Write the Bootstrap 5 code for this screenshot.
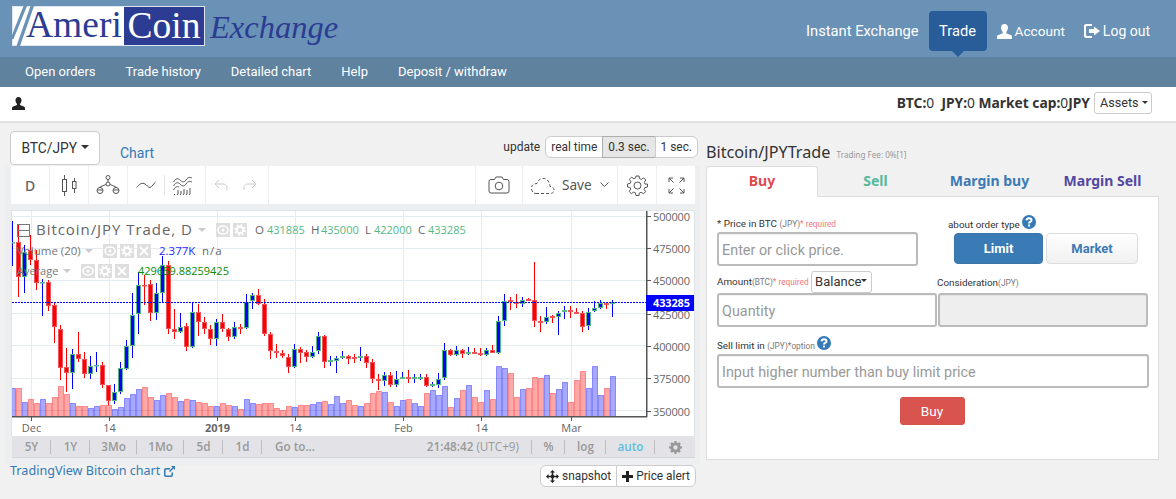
<!DOCTYPE html>
<html lang="en">
<head>
<meta charset="utf-8">
<title>AmeriCoin Exchange</title>
<link href="https://cdn.jsdelivr.net/npm/bootstrap@5.3.0/dist/css/bootstrap.min.css" rel="stylesheet">
<style>
html,body{height:499px;overflow:hidden}
body{background:#f1f1f1;font-family:Roboto,"Open Sans",sans-serif;font-size:13px;color:#333;width:1176px}
a{text-decoration:none}
.hdr{height:57px;background:#6992b6;padding-left:12px;padding-right:26px}
.logo-box{height:40px;width:193px;background:#fff;margin-top:6px;position:relative;padding-left:14px;font-family:"Liberation Serif",serif;font-size:37.500px;line-height:37px;color:#2b3c92;box-shadow:inset 0 0 0 1px #dfe6ef}
.logo-stripes{position:absolute;left:0;top:0}
.logo-coin{position:absolute;right:1px;top:1px;width:80px;height:38px;background:#2b3c92;color:#fff;text-align:center}
.logo-word{font-family:"Liberation Serif",serif;font-style:italic;font-size:32.5px;color:#2b3c92;margin-left:5px;margin-top:8px;line-height:38px}
.top-link{color:#fff;font-size:14px;display:flex;align-items:center;gap:3px;height:40px}
.top-main{font-size:14.7px}
.top-acct{font-size:13.6px}
.top-active{background:#285d9a;border-radius:4px;padding:0 10px;position:relative;margin:0 10px;width:58px;justify-content:center}
.top-active::after{content:"";position:absolute;left:50%;margin-left:-6px;bottom:-6px;border:6px solid transparent;border-bottom:0;border-top-color:#285d9a}
.subbar{height:30px;background:#5f829f;padding-left:10px}
.sub-link{color:#fff;font-size:13px;padding:0 15px;line-height:30px}
.userbar{height:36px;background:#fff;border-bottom:2px solid #e2e2e2;padding:0 24px 2px 12px}
.assets-line{font-size:13.8px;color:#333;font-family:"Noto Sans",sans-serif}
.assets-line b{font-weight:700}
.mini-btn{font-size:12.6px;padding:0 5px;width:58px;height:22px;line-height:20px;background:#fff;border:1px solid #ccc;color:#333;border-radius:3px;white-space:nowrap}
.left-col{width:700px;flex:none}
.head-row{height:43px;padding:8px 2px 0 10px}
.pair-btn{width:90px;height:34px;font-size:13.8px;background:#fff;border:1px solid #ccc;border-radius:4px;color:#333;padding:0}
.chart-link{color:#337ab7;font-size:14px;margin-left:20px;margin-top:12px;line-height:20px}
.update-word{font-size:12px;margin-right:5px;color:#333;line-height:18px}
.seg{font-size:11.9px;padding:0 5px;height:22px;line-height:20px;background:#fff;border-color:#ccc;color:#333}
.seg.on{background:#e6e6e6;border-color:#adadad}
.frame{margin-left:5px;width:695px;height:299px;background:#eceef0;padding:0 5px 0 6px}
.tool-row{height:38px;gap:1px;font-family:"Noto Sans",sans-serif}
.tool{background:#fff;height:38px;color:#555;border-radius:0}
.tool-sep{width:1px;height:20px;background:#e4e6e8}
.chart-box{margin-top:6px;border:1px solid #e0e3e6;border-bottom:0;width:684px;background:#fff;height:226px}
.chart-svg{display:block;width:682px;height:225px;overflow:visible}
.chart-svg text{font-family:"Open Sans",sans-serif}
.range-row{width:683px;height:22px;background:#e3e3e7;margin-left:1px;font-size:11.7px;font-weight:600;color:#999;border-bottom:1px solid #d4d6d9;font-family:"Open Sans",sans-serif}
.range{display:flex;align-items:center;justify-content:center;height:22px;position:relative}
.range::after{content:"";position:absolute;right:0;top:4px;bottom:4px;width:1px;background:#bcbcc0}
.range.end::after{display:none}
.foot-row{padding:0 4px 0 10px;height:24px}
.tv-link{color:#337ab7;font-size:12.6px;line-height:14px;font-family:"Noto Sans",sans-serif}
.foot-btn{font-size:11.9px;height:22px;padding:0 5px;line-height:20px;background:#fff;border-color:#ccc;color:#333;display:inline-flex;align-items:center;gap:3px}
.right-col{width:453px;margin-left:6px;flex:none;padding-top:18px}
.trade-title{font-size:16.2px;line-height:22px;height:25px;color:#333;font-family:"Noto Sans",sans-serif}
.trade-title small{font-size:8.1px;color:#999;margin-left:2px}
.tabs-row{border-bottom:1px solid #ddd;height:31px;flex-wrap:nowrap;font-family:"Noto Sans",sans-serif}
.tabs-row .nav-link{width:113px;height:31px;padding:0;line-height:28px;text-align:center;font-weight:700;font-size:14px;border-radius:4px 4px 0 0}
.tabs-row .nav-link.active{background:#fff;border-color:#ddd #ddd #fff;width:112px}
.tabs-row .t-buy,.tabs-row .t-buy.active{color:#e0494f}
.tabs-row .t-sell{color:#55b99a;width:115px}.tabs-row .t-mb{color:#3a7ab5}.tabs-row .t-ms{color:#54489f}
.trade-panel{background:#fff;border:1px solid #ddd;border-top:0;height:263px;padding:18px 10px 0 10px}
.lbl{font-size:9.9px;line-height:12px;color:#333;white-space:nowrap}
.lbl i{font-style:normal;font-size:8.3px;color:#777}
.lbl em{font-style:normal;font-size:8.3px;color:#f0787c}
.inp{height:34px;border:2px solid #bbb;border-radius:3px;padding:3px 3px 0;font-size:14.4px;box-shadow:inset 0 1px 1px rgba(0,0,0,.06)}
.inp::placeholder{color:#999}
.inp:disabled{background:#eee}
.w-price{width:201px}
.w-qty{width:220px}
.w-cons{width:210px;margin-left:1px}
.w-full{width:432px}
.type-col{margin-left:30px;width:200px}
.type-btn{height:31px;font-weight:700;font-size:13px;padding:0;border-radius:4px}
.t-limit{width:89px;background:#3a7ab5;border:1px solid #3a74a8;color:#fff}
.t-market{width:92px;margin-left:3px;background:linear-gradient(#fff,#f0f0f0);border:1px solid #ddd;color:#3a7ab5}
.bal-btn{font-size:13px;height:22px;width:61px;padding:0;line-height:20px;margin-left:2px;background:#fff;border:1px solid #ccc;color:#333;border-radius:3px}
.bal-btn::after{margin-left:0}
.buy-btn{width:65px;height:28px;padding:0;margin-right:2px;background:#d9534f;border:1px solid #d6504c;color:#fff;font-size:13.6px;border-radius:3px}
.q-ico{display:inline-block;vertical-align:-1px}
</style>
</head>
<body>
<header class="hdr d-flex justify-content-between align-items-start">
  <div class="d-flex">
    <div class="logo-box">
      <svg class="logo-stripes" width="30" height="40" viewBox="0 0 30 40"><path d="M11.500 0h3.500L1.500 33H0v-4zM18.500 0h3.500L8 40H4.500z" fill="#6992b6"/></svg>
      <span>Ameri</span><span class="logo-coin">Coin</span>
    </div>
    <div class="logo-word">Exchange</div>
  </div>
  <nav class="d-flex align-items-center" style="margin-top:11px">
    <a class="top-link top-main" href="#">Instant Exchange</a>
    <a class="top-link top-main top-active" href="#">Trade</a>
    <a class="top-link top-acct" href="#"><svg width="15" height="15" viewBox="0 0 15 15"><path fill="#fff" d="M7.500 0C5.300 0 4 1.600 4 3.800c0 1.700.8 3.200 1.700 4.100v1.300L.8 11.300C.2 11.600 0 12.100 0 12.800V15h15v-2.200c0-.7-.2-1.200-.8-1.500l-4.900-2.100V7.900c.9-.9 1.700-2.400 1.700-4.100C11 1.600 9.700 0 7.500 0z"/></svg>Account</a>
    <a class="top-link" href="#" style="margin-left:19px"><svg width="16" height="14" viewBox="0 0 16 14"><path fill="#fff" d="M2 0h6v2H3a1 1 0 0 0-1 1v8a1 1 0 0 0 1 1h5v2H2a2 2 0 0 1-2-2V2a2 2 0 0 1 2-2zM10 2.500 16 7l-6 4.500V9H5V5h5z"/></svg>Log out</a>
  </nav>
</header>
<div class="subbar d-flex align-items-center">
  <a class="sub-link" href="#">Open orders</a>
  <a class="sub-link" href="#">Trade history</a>
  <a class="sub-link" href="#">Detailed chart</a>
  <a class="sub-link" href="#">Help</a>
  <a class="sub-link" href="#">Deposit / withdraw</a>
</div>
<div class="userbar d-flex justify-content-between align-items-center">
  <svg width="13" height="13" viewBox="0 0 15 15"><path fill="#222" d="M7.500 0C5.300 0 4 1.600 4 3.800c0 1.700.8 3.200 1.700 4.100v1.300L.8 11.300C.2 11.600 0 12.100 0 12.800V15h15v-2.200c0-.7-.2-1.200-.8-1.500l-4.900-2.100V7.900c.9-.9 1.700-2.400 1.700-4.100C11 1.600 9.700 0 7.500 0z"/></svg>
  <div class="d-flex align-items-center">
    <span class="assets-line"><b>BTC:</b>0&nbsp; <b>JPY:</b>0 <b>Market cap:</b>0<b>JPY</b></span>
    <button class="mini-btn dropdown-toggle ms-1" type="button">Assets</button>
  </div>
</div>
<main class="d-flex">
  <section class="left-col">
    <div class="head-row d-flex align-items-start">
      <button class="pair-btn dropdown-toggle" type="button">BTC/JPY</button>
      <a class="chart-link" href="#">Chart</a>
      <div class="ms-auto d-flex align-items-center" style="margin-top:5px">
        <span class="update-word">update</span>
        <div class="btn-group">
          <button class="btn seg" type="button">real time</button>
          <button class="btn seg on" type="button">0.3 sec.</button>
          <button class="btn seg" type="button">1 sec.</button>
        </div>
      </div>
    </div>
    <div class="frame">
      <div class="tool-row d-flex">
        <div class="tool d-flex align-items-center justify-content-center" style="width:38px;font-size:14px;color:#666;font-weight:500">D</div>
        <div class="tool d-flex align-items-center justify-content-center" style="width:38px">
          <svg width="16" height="21" viewBox="0 0 16 21" fill="none" stroke="#555"><path d="M3.500 0v4M3.500 17v4M13.500 3v3.500M13.500 14v4"/><rect x="1.500" y="4.500" width="4" height="12"/><rect x="11.500" y="6.500" width="3.500" height="7"/></svg>
        </div>
        <div class="tool d-flex align-items-center justify-content-center" style="width:38px">
          <svg width="24" height="20" viewBox="0 0 24 20" fill="none" stroke="#555"><circle cx="12" cy="2.500" r="2"/><circle cx="12" cy="9" r="2"/><path d="M12 4.500V7M10 9.500 4 12M14 9.500 20 12M1 15h6M17 15h6M4 12v1M20 12v1"/><circle cx="4" cy="15.500" r="3"/><circle cx="20" cy="15.500" r="3"/></svg>
        </div>
        <div class="tool d-flex align-items-center" style="width:77px">
          <svg class="ms-2" width="20" height="10" viewBox="0 0 20 10" fill="none" stroke="#555"><path d="M.5 7.500C3 5 5 2.500 8 3.500S12 8 14 7.500 18 3 19.500 2"/></svg>
          <span class="tool-sep ms-2"></span>
          <svg class="ms-2" width="20" height="19" viewBox="0 0 20 19" fill="none" stroke="#555"><path d="M.5 6C3 2 5 2 7 4s4 3 6 0 4-3 6-2M.5 10C3 6 5 6 7 8s4 3 6 0 4-3 6-2M.5 14C2 11 4 10 6 11"/><path stroke-dasharray="1 2" d="M1 18.500h18"/><path d="M5 18v-4M8 18v-3M11 18v-5M14 18v-4M17 18v-6"/></svg>
        </div>
        <div class="tool d-flex align-items-center" style="width:62px">
          <svg class="ms-2" width="14" height="12" viewBox="0 0 14 12" fill="none" stroke="#ccc"><path d="M5 1 1 5l4 4M1 5h8c3 0 4 2 4 6"/></svg>
          <svg style="margin-left:15px" width="14" height="12" viewBox="0 0 14 12" fill="none" stroke="#ccc"><path d="M9 1l4 4-4 4M13 5H5C2 5 1 7 1 11"/></svg>
        </div>
        <div class="tool flex-grow-1"></div>
        <div class="tool d-flex align-items-center justify-content-center" style="width:46px">
          <svg width="22" height="18" viewBox="0 0 22 18" fill="none" stroke="#555"><path d="M3 3.500h3.500L8 1h6l1.500 2.500H19a2 2 0 0 1 2 2v9.500a2 2 0 0 1-2 2H3a2 2 0 0 1-2-2V5.500a2 2 0 0 1 2-2z"/><circle cx="11" cy="10" r="3.800"/></svg>
        </div>
        <div class="tool d-flex align-items-center" style="width:94px;font-size:13.6px">
          <svg class="ms-2" width="24" height="17" viewBox="0 0 24 17" fill="none" stroke="#555" stroke-dasharray="3 2"><path d="M5 16.500H19c6 0 5-7 0-7 0-5-4-9-8-8-3 .5-4 3-5 5-4 0-7 3-5 7 .5 2 2 3 4 3z"/></svg>
          <span style="margin-left:7px">Save</span>
          <svg class="ms-auto me-2" width="9" height="6" viewBox="0 0 9 6" fill="none" stroke="#555"><path d="M.5.500 4.500 4.500 8.500.500"/></svg>
        </div>
        <div class="tool d-flex align-items-center justify-content-center" style="width:38px">
          <svg width="21" height="21" viewBox="0 0 21 21" fill="none" stroke="#555"><circle cx="10.500" cy="10.500" r="3.500"/><path d="M9 1h3l.6 2.700 1.700.7 2.400-1.500 2.100 2.100-1.500 2.400.7 1.700L20.500 9v3l-2.700.6-.7 1.700 1.500 2.400-2.100 2.100-2.400-1.500-1.700.7L12 20.500H9l-.6-2.700-1.700-.7-2.400 1.500-2.100-2.100 1.500-2.400-.7-1.700L.5 12V9l2.700-.6.7-1.700-1.500-2.400 2.100-2.100 2.400 1.500 1.700-.7z"/></svg>
        </div>
        <div class="tool d-flex align-items-center justify-content-center" style="width:38px">
          <svg width="17" height="17" viewBox="0 0 17 17" fill="none" stroke="#555"><path d="M1 5V1h4M1 1l4.500 4.500M12 1h4v4M16 1l-4.500 4.500M1 12v4h4M1 16l4.500-4.500M16 12v4h-4M16 16l-4.500-4.500"/></svg>
        </div>
      </div>
      <div class="chart-box">
        <svg class="chart-svg" id="chart" viewBox="12 211 682 225" xmlns="http://www.w3.org/2000/svg"></svg>
      </div>
      <div class="range-row d-flex">
        <div class="range" style="width:39px">5Y</div>
        <div class="range" style="width:39px">1Y</div>
        <div class="range" style="width:47px">3Mo</div>
        <div class="range" style="width:47px">1Mo</div>
        <div class="range" style="width:39px">5d</div>
        <div class="range" style="width:39px">1d</div>
        <div class="range end" style="width:66px">Go to...</div>
        <div class="range flex-grow-1 justify-content-end" style="padding-right:13px">21:48:42&nbsp;<span class="fw-normal">(UTC+9)</span></div>
        <div class="range" style="width:33px">%</div>
        <div class="range" style="width:41px">log</div>
        <div class="range" style="width:49px;color:#5bc0de">auto</div>
        <div class="range end" style="width:40px"><svg width="13" height="13" viewBox="0 0 21 21" fill="#999"><path fill-rule="evenodd" d="M9 0h3l.6 2.700 1.700.7L16.700 2l2.300 2.300-1.400 2.400.7 1.700 2.700.6v3l-2.700.6-.7 1.700 1.400 2.400-2.300 2.300-2.400-1.400-1.700.7L12 21H9l-.6-2.700-1.700-.7L4.300 19 2 16.700l1.400-2.400-.7-1.700L0 12V9l2.700-.6.7-1.700L2 4.300 4.300 2l2.400 1.400 1.700-.7zM10.500 7a3.500 3.500 0 1 0 0 7 3.500 3.500 0 0 0 0-7z"/></svg></div>
      </div>
    </div>
    <div class="foot-row d-flex justify-content-between align-items-start">
      <a class="tv-link" href="#" style="margin-top:-1px">TradingView Bitcoin chart <svg width="11" height="11" viewBox="0 0 11 11"><path fill="#337ab7" d="M2 2h4v1.500H2.500a1 1 0 0 0-1 1V8.500a1 1 0 0 0 1 1h4a1 1 0 0 0 1-1V6.500H9V9a2 2 0 0 1-2 2H2a2 2 0 0 1-2-2V4a2 2 0 0 1 2-2zM7 0h4v4L9.500 2.500 6 6 5 5l3.500-3.500z"/></svg></a>
      <div class="btn-group">
        <button class="btn foot-btn" type="button"><svg width="13" height="13" viewBox="0 0 13 13"><path fill="#222" d="M6.500 0 9 2.500H7.300v2.200a2 2 0 0 1 1 1h2.200V4L13 6.500 10.500 9V7.300H8.300a2 2 0 0 1-1 1v2.200H9L6.500 13 4 10.500h1.700V8.300a2 2 0 0 1-1-1H2.500V9L0 6.500 2.500 4v1.700h2.200a2 2 0 0 1 1-1V2.500H4z"/></svg>snapshot</button>
        <button class="btn foot-btn" type="button"><svg width="11" height="11" viewBox="0 0 11 11"><path fill="#222" d="M4 0h3v4h4v3H7v4H4V7H0V4h4z"/></svg>Price alert</button>
      </div>
    </div>
  </section>
  <section class="right-col">
    <div class="trade-title">Bitcoin/JPYTrade <small>Trading Fee: 0%[1]</small></div>
    <ul class="nav nav-tabs tabs-row">
      <li class="nav-item"><a class="nav-link active t-buy" href="#">Buy</a></li>
      <li class="nav-item"><a class="nav-link t-sell" href="#">Sell</a></li>
      <li class="nav-item"><a class="nav-link t-mb" href="#">Margin buy</a></li>
      <li class="nav-item"><a class="nav-link t-ms" href="#">Margin Sell</a></li>
    </ul>
    <form class="trade-panel">
      <div class="d-flex">
        <div class="w-price">
          <div class="lbl" style="margin-top:3px;margin-bottom:2px">* Price in BTC <i>(JPY)</i><em>* required</em></div>
          <input class="form-control inp" type="text" placeholder="Enter or click price.">
        </div>
        <div class="type-col">
          <div class="lbl" style="height:18px;line-height:20px">about order type <svg class="q-ico" width="14" height="14" viewBox="0 0 14 14"><circle cx="7" cy="7" r="7" fill="#337ab7"/><path fill="none" stroke="#fff" stroke-width="2" d="M4.500 5.300C4.700 3.800 5.700 3.200 7 3.200c1.500 0 2.500.8 2.500 2 0 1.800-2.500 1.700-2.500 3.300"/><rect x="6" y="9.500" width="2" height="2" fill="#fff"/></svg></div>
          <div class="d-flex" style="margin-left:6px">
            <button class="btn type-btn t-limit" type="button">Limit</button>
            <button class="btn type-btn t-market" type="button">Market</button>
          </div>
        </div>
      </div>
      <div class="d-flex" style="margin-top:4px">
        <div class="w-qty">
          <div class="lbl d-flex align-items-center" style="height:23px">Amount<i>(BTC)</i><em>* required</em><button class="bal-btn dropdown-toggle" type="button">Balance</button></div>
          <input class="form-control inp" type="text" placeholder="Quantity">
        </div>
        <div class="w-cons">
          <div class="lbl d-flex align-items-center" style="height:23px;padding-top:2px;margin-left:-1px">Consideration<i>(JPY)</i></div>
          <input class="form-control inp" type="text" disabled>
        </div>
      </div>
      <div class="lbl w-full" style="margin-top:9px;height:18px;line-height:18px">Sell limit in <i>(JPY)*option</i> <svg class="q-ico" width="14" height="14" viewBox="0 0 14 14"><circle cx="7" cy="7" r="7" fill="#337ab7"/><path fill="none" stroke="#fff" stroke-width="2" d="M4.500 5.300C4.700 3.800 5.700 3.200 7 3.200c1.500 0 2.500.8 2.500 2 0 1.800-2.500 1.700-2.500 3.300"/><rect x="6" y="9.500" width="2" height="2" fill="#fff"/></svg></div>
      <input class="form-control inp w-full" type="text" placeholder="Input higher number than buy limit price">
      <div class="w-full text-center" style="margin-top:9px"><button class="btn buy-btn" type="button">Buy</button></div>
    </form>
  </section>
</main>
<script src="https://cdn.jsdelivr.net/npm/bootstrap@5.3.0/dist/js/bootstrap.bundle.min.js"></script>
<script>
// [type, wickTop, bodyTop, bodyBottom, wickBottom, volumeTop]
const c=[
['b',221,242,243,266,388],['r',225,242,277,297,388],['b',245,252,277,293,402],['r',235,250,260,265,399],['r',250,260,283,290,403],
['b',279,282,283,316,399],['r',280,282,306,311,403],['r',302,305,327,343,397],['r',325,329,368,380,386],['r',348,367,373,392,394],
['b',349,354,373,389,403],['r',332,354,359,362,406],['r',352,359,374,378,406],['b',356,366,374,379,408],['b',352,365,366,372,406],
['r',362,365,385,388,405],['r',385,385,401,405,405],['b',384,392,401,404,409],['b',362,368,392,394,407],['b',340,346,369,370,398],
['b',293,315,346,358,394],['b',272,285,314,334,389],['r',275,285,286,305,387],['r',280,284,313,321,397],['b',283,293,313,320,400],
['b',256,265,293,303,395],['r',261,265,329,334,393],['r',309,329,332,339,397],['b',313,327,332,333,401],['r',323,326,347,351,399],
['b',302,312,347,348,400],['r',304,312,322,336,402],['r',317,322,329,334,403],['r',325,329,339,345,406],['b',319,322,339,346,406],
['r',314,322,329,332,403],['r',328,329,337,341,405],['b',322,327,337,339,406],['r',324,327,329,334,409],['b',294,302,328,329,399],
['b',293,295,301,309,403],['r',289,295,304,305,404],['r',299,304,334,336,403],['r',332,334,351,359,403],['r',344,351,353,358,408],
['r',350,353,356,358,410],['r',354,357,367,373,406],['b',344,349,367,368,407],['r',347,349,353,363,405],['r',350,352,357,362,405],
['b',346,352,357,358,404],['b',332,336,351,354,402],['r',335,336,362,368,401],['b',356,360,362,366,404],['b',356,358,361,373,396],
['b',351,356,358,359,403],['r',355,356,359,364,400],['r',354,357,359,363,405],['b',347,356,358,361,406],['r',354,356,363,368,403],
['r',359,362,379,383,393],['r',374,379,381,390,391],['b',372,375,381,386,392],['r',372,375,385,387,402],['b',371,379,385,387,406],
['b',372,377,379,379,400],['r',370,377,379,383,399],['b',374,377,379,383,403],['b',374,377,379,380,406],['r',374,377,386,387,393],
['b',382,384,386,387,390],['b',373,379,385,388,395],['b',343,350,378,380,386],['r',349,350,355,356,407],['b',346,350,355,356,398],
['r',349,350,354,358,390],['b',347,352,354,355,385],['r',348,352,354,354,397],['r',348,353,355,356,402],['b',348,350,355,356,390],
['r',345,350,353,353,399],['b',316,321,353,354,366],['b',294,301,321,326,368],['r',297,300,302,310,373],['r',294,302,304,308,397],
['b',297,300,304,307,389],['r',298,299,301,301,388],['r',262,300,321,327,377],['r',316,321,323,332,378],['b',307,317,322,324,375],
['r',315,316,318,323,393],['b',311,313,317,335,389],['b',306,310,312,319,382],['r',306,310,312,318,402],['r',308,312,314,314,380],
['r',311,313,327,332,371],['b',308,312,326,330,388],['b',301,308,311,312,366],['b',300,303,308,309,395],['r',302,303,305,309,388],['b',300,302,304,317,376]
];
const grid='#e4ebf1';
let s='<defs><clipPath id="plot"><rect x="12" y="211" width="634" height="206"/></clipPath></defs><g clip-path="url(#plot)">';
[216,248,280,313,345,378,410].forEach(y=>{s+=`<rect x="12" y="${y}" width="634" height="1" fill="${grid}"/>`});
[31,109,217,295,403,481,571].forEach(x=>{s+=`<rect x="${x}" y="211" width="1" height="206" fill="${grid}"/>`});
c.forEach((d,i)=>{
  const col=d[0]==='b'?'0,0,255':'255,0,0';
  const bx=10.5+6*i;
  s+=`<rect x="${bx}" y="${d[5]+.5}" width="5" height="${416-d[5]}" fill="rgba(${col},.34)" stroke="rgba(${col},.36)"/>`;
});
c.forEach((d,i)=>{
  const w=d[0]==='b'?'#0000ff':'#ff0000', e=d[0]==='b'?'#53b987':'#f0545a';
  const x=12+6*i;
  s+=`<rect x="${x}" y="${d[1]}" width="1" height="${d[4]-d[1]}" fill="${w}"/>`;
  s+=`<rect x="${x-1.5}" y="${d[2]+.5}" width="4" height="${Math.max(d[3]-d[2]-1,.5)}" fill="${w}" stroke="${e}"/>`;
});
s+='</g>';
s+=`<line x1="12" x2="646" y1="302.500" y2="302.500" stroke="#0000ff" stroke-dasharray="2 1" shape-rendering="crispEdges"/>`;
s+=`<rect x="12" y="416" width="635" height="1.500" fill="#555"/><rect x="646" y="211" width="1.500" height="206" fill="#555"/>`;
[['500000',216],['475000',248],['450000',280],['425000',314],['400000',346],['375000',378],['350000',411]].forEach(p=>{
  s+=`<rect x="647" y="${p[1]}" width="4" height="1" fill="#555"/><text x="653" y="${p[1]+4.500}" font-size="11" fill="#666" textLength="37">${p[0]}</text>`;
});
s+=`<rect x="646" y="295" width="48" height="16" fill="#0000ff"/><text x="653" y="307" font-size="11" font-weight="700" fill="#fff" textLength="37">433285</text>`;
[['Dec',31,400],['14',109,400],['2019',217,700],['14',295,400],['Feb',403,400],['14',481,400],['Mar',571,400]].forEach(t=>{
  s+=`<rect x="${t[1]}" y="417" width="1" height="4" fill="#555"/><text x="${t[1]+.5}" y="432" font-size="11" text-anchor="middle" font-weight="${t[2]}" fill="#666">${t[0]}</text>`;
});
function tile(x,y,k){
  let g=`<rect x="${x}" y="${y}" width="14" height="14" fill="#dedede"/>`;
  const cx=x+7,cy=y+7;
  if(k==='e')g+=`<ellipse cx="${cx}" cy="${cy}" rx="5" ry="4" fill="none" stroke="#fff" stroke-width="1.500"/><circle cx="${cx}" cy="${cy}" r="1.500" fill="#fff"/>`;
  if(k==='g')g+=`<circle cx="${cx}" cy="${cy}" r="3.200" fill="none" stroke="#fff" stroke-width="2"/><circle cx="${cx}" cy="${cy}" r="5" fill="none" stroke="#fff" stroke-width="1.500" stroke-dasharray="2 1.900"/>`;
  if(k==='x')g+=`<path d="M${cx-4} ${cy-4}l8 8M${cx+4} ${cy-4}l-8 8" stroke="#fff" stroke-width="1.800"/>`;
  return g;
}
function caret(x,y){return `<path d="M${x} ${y}h8l-4 4z" fill="#ccc"/>`}
s+=`<rect x="17.500" y="224.500" width="12" height="12" fill="none" stroke="#777"/><path d="M17 230.500h13" stroke="#777"/>`;
s+=`<text x="36" y="235" font-size="15" fill="#666" letter-spacing=".95">Bitcoin/JPY Trade, D</text>`+caret(198,228);
s+=tile(216,223,'e')+tile(233,223,'g');
const leg=[['O',255,'431885',267],['H',311,'435000',321],['L',365,'422000',374],['C',418,'433285',428]];
leg.forEach(l=>{s+=`<text x="${l[1]}" y="234" font-size="11.500" fill="#666">${l[0]}</text><text x="${l[3]}" y="234" font-size="11" fill="#53b987">${l[2]}</text>`});
s+=`<text x="17" y="255" font-size="11.500" fill="#777">Volume (20)</text>`+caret(85,249);
s+=tile(103,244,'e')+tile(120,244,'g')+tile(137,244,'x');
s+=`<text x="159" y="255" font-size="11.500" fill="#2a2aff">2.377K</text><text x="202" y="255" font-size="11.500" fill="#666" letter-spacing="1">n/a</text>`;
s+=`<text x="17" y="275" font-size="11" fill="#777">Average</text>`+caret(63,269);
s+=tile(81,264,'e')+tile(98,264,'g')+tile(115,264,'x');
s+=`<text x="138" y="275" font-size="11" fill="#0a8a0a">429659.88259425</text>`;
document.getElementById('chart').innerHTML=s;
</script>
</body>
</html>
